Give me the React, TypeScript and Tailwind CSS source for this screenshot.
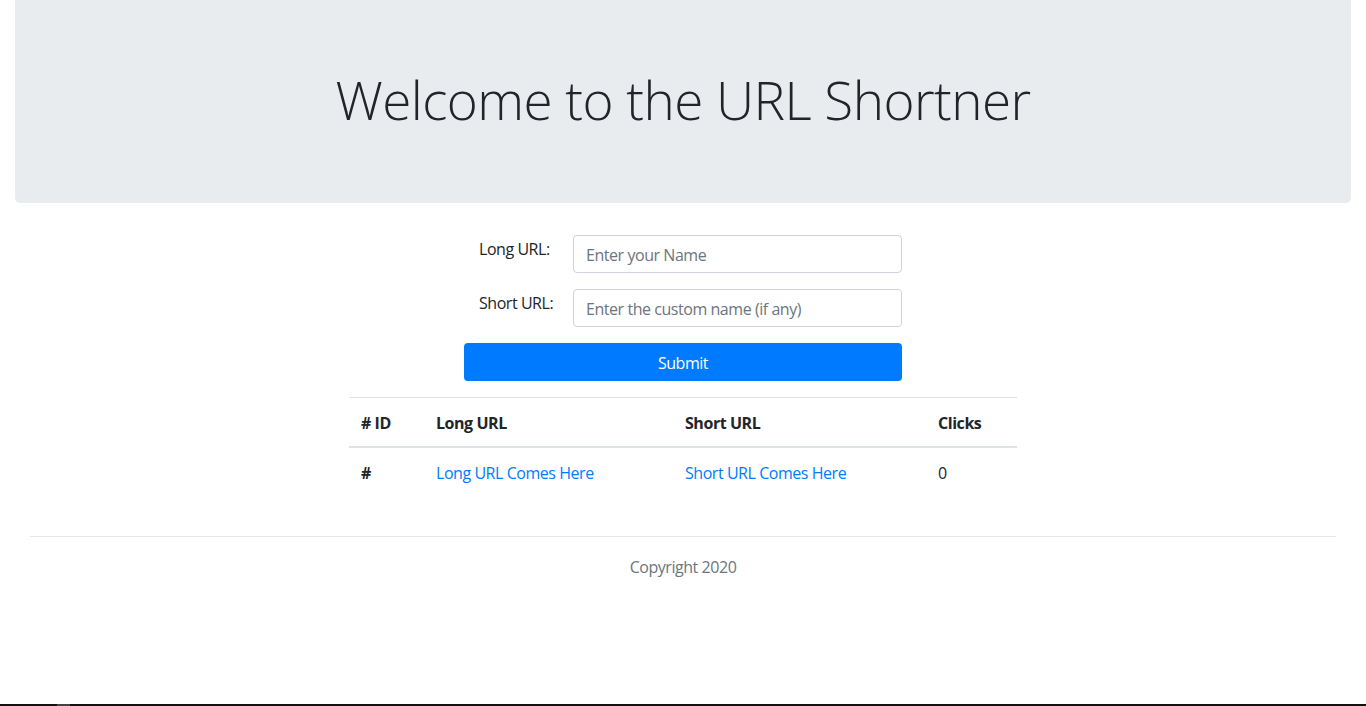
const font = { fontFamily: '"Open Sans", "Noto Sans", Arial, sans-serif' };

const rows = [
  { id: "#", long: "Long URL Comes Here", short: "Short URL Comes Here", clicks: 0 },
];

function Field({ label, placeholder }: { label: string; placeholder: string }) {
  return (
    <div className="flex items-start mb-4">
      <label className="w-[109px] shrink-0 pl-[15px] pt-[2px] text-[16px] leading-6 text-[#212529]">
        {label}
      </label>
      <input
        type="text"
        placeholder={placeholder}
        className="flex-1 h-[38px] rounded-[4px] border border-[#ced4da] bg-white px-3 pt-[2px] text-[16px] tracking-[-0.45px] text-[#495057] placeholder:text-[#6c757d] outline-none"
      />
    </div>
  );
}

export default function App() {
  return (
    <div className="flex h-[706px] flex-col bg-white tracking-[-0.45px] text-[#212529]" style={font}>
      <div className="mx-[15px] rounded-b-[5px] bg-[#e9ecef] px-8 py-16">
        <h1 className="mb-2 h-[67px] text-center text-[53px] font-light leading-[71px] tracking-[-0.55px] text-[#212529]">
          Welcome to the URL Shortner
        </h1>
      </div>

      <form className="mx-auto mt-8 w-[438px]" onSubmit={(e) => e.preventDefault()}>
        <Field label="Long URL:" placeholder="Enter your Name" />
        <Field label="Short URL:" placeholder="Enter the custom name (if any)" />
        <button
          type="submit"
          className="mb-4 h-[38px] w-full rounded-[4px] bg-[#007bff] pt-[2px] text-[16px] tracking-[-0.45px] text-white"
        >
          Submit
        </button>
      </form>

      <table className="mx-auto w-[668px] border-collapse text-left text-[16px] leading-6">
        <thead>
          <tr className="border-t border-b-2 border-t-[#dee2e6] border-b-[#dee2e6]">
            <th className="w-[75px] px-3 pt-[13px] pb-[11px] font-bold">&#35; ID</th>
            <th className="w-[249px] px-3 pt-[13px] pb-[11px] font-bold">Long URL</th>
            <th className="w-[253px] px-3 pt-[13px] pb-[11px] font-bold">Short URL</th>
            <th className="px-3 pt-[13px] pb-[11px] font-bold">Clicks</th>
          </tr>
        </thead>
        <tbody>
          {rows.map((r) => (
            <tr key={r.long}>
              <th className="px-3 pt-[13px] pb-[11px] font-bold">{r.id}</th>
              <td className="px-3 pt-[13px] pb-[11px]">
                <a href="#" className="text-[#007bff]">{r.long}</a>
              </td>
              <td className="px-3 pt-[13px] pb-[11px]">
                <a href="#" className="text-[#007bff]">{r.short}</a>
              </td>
              <td className="px-3 pt-[13px] pb-[11px]">{r.clicks}</td>
            </tr>
          ))}
        </tbody>
      </table>

      <footer className="mx-[30px] mt-[40px]">
        <hr className="border-t border-[#e5e5e5]" />
        <p className="mt-[18px] text-center text-[16px] leading-6 text-[#6c757d]">Copyright 2020</p>
      </footer>

      <div className="flex-1" />
      <div className="flex h-[2px] bg-[#111]">
        <div className="ml-[57px] w-[13px] bg-[#444]" />
      </div>
    </div>
  );
}
